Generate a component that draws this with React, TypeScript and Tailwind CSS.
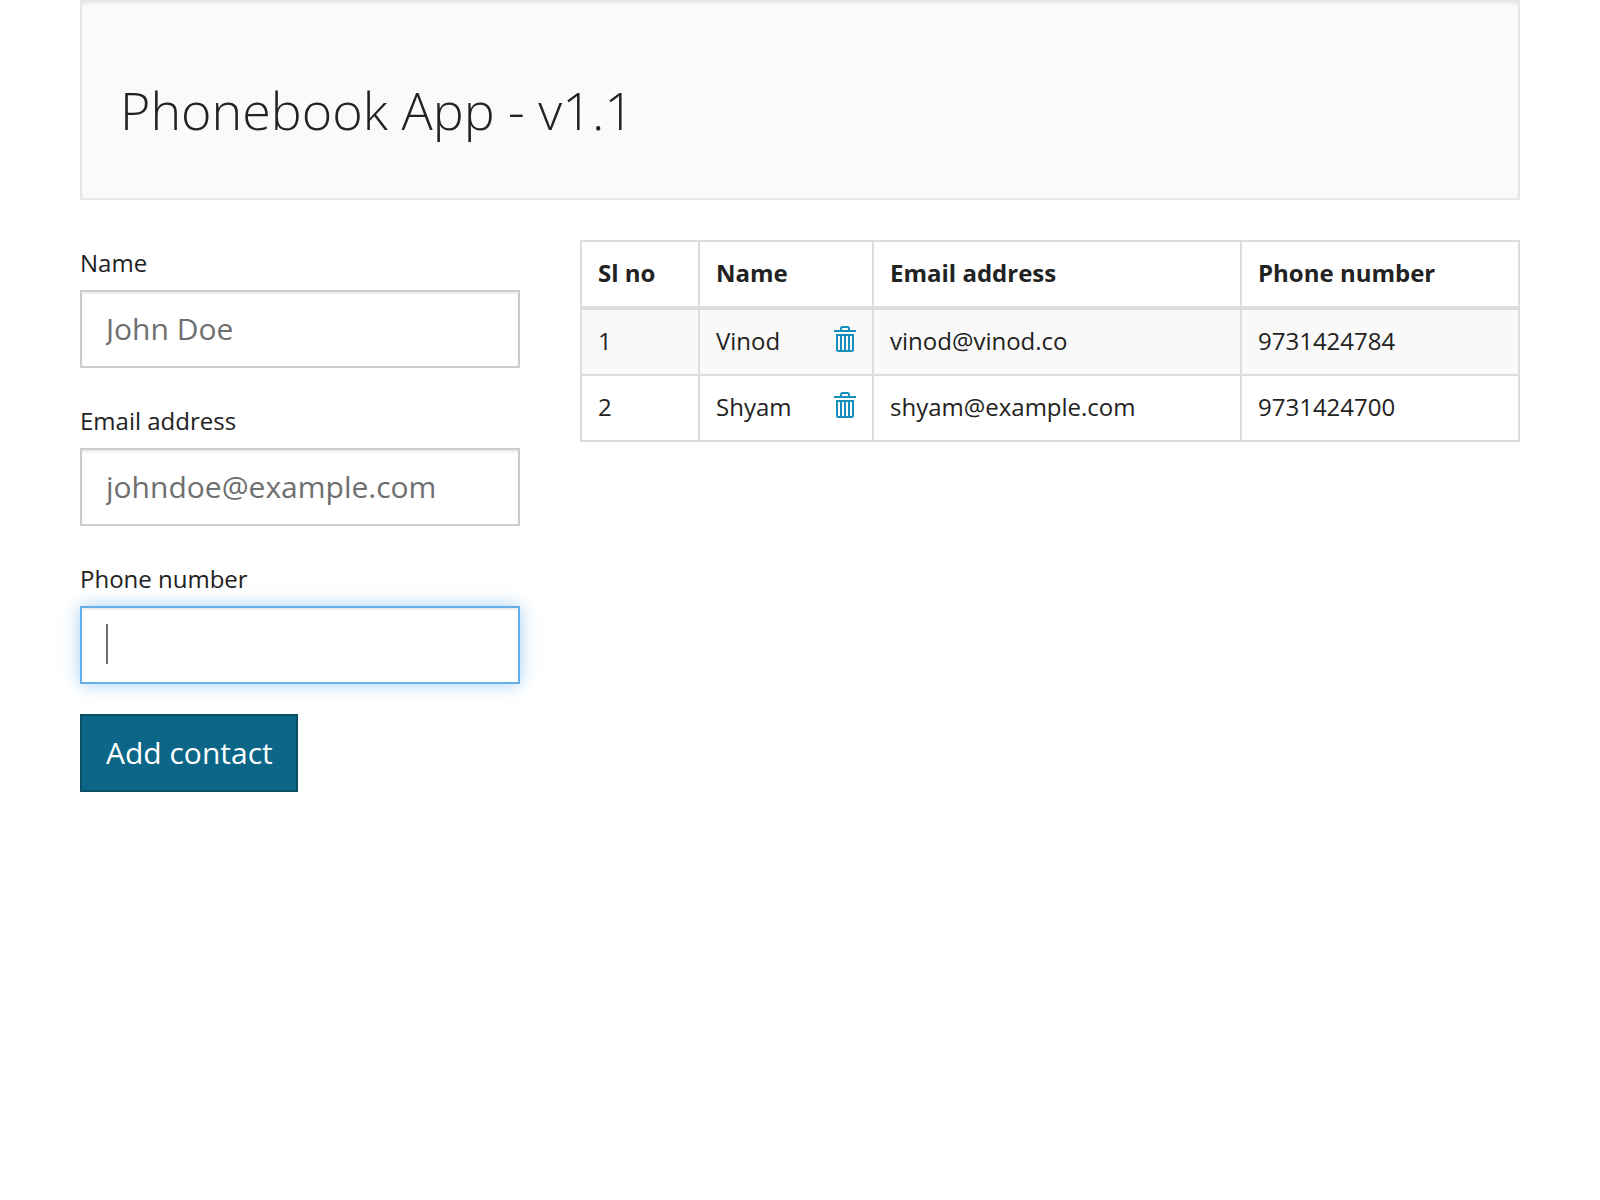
import React from "react";

type Contact = { id: number; name: string; email: string; phone: string };

const contacts: Contact[] = [
  { id: 1, name: "Vinod", email: "vinod@vinod.co", phone: "9731424784" },
  { id: 2, name: "Shyam", email: "shyam@example.com", phone: "9731424700" },
];

function TrashIcon() {
  return (
    <svg width="22" height="26" viewBox="0 0 22 26" fill="none" stroke="currentColor" strokeWidth="2" aria-hidden="true">
      <path d="M0 5h22" />
      <path d="M7 4V2.500Q7 1 8.500 1h5Q15 1 15 2.500V4" />
      <path d="M3 9h16v14.500Q19 25 17.500 25h-13Q3 25 3 23.500z" />
      <path d="M7 9v16M11 9v16M15 9v16" />
    </svg>
  );
}

const field =
  "block h-[78px] w-full border-2 border-[#cccccc] bg-white px-6 pb-0.5 text-[30px] text-[#6f6f6f] shadow-[inset_0_2px_2px_rgba(0,0,0,0.08)] outline-none placeholder:text-[#6f6f6f]";
const activeField =
  "block h-[78px] w-full border-2 border-[#66afe9] bg-white px-6 pb-0.5 text-[30px] text-[#6f6f6f] caret-transparent shadow-[inset_0_2px_2px_rgba(0,0,0,0.08),0_0_16px_rgba(102,175,233,0.6)] outline-none";
const label = "block h-[50px] pt-[5px] text-2xl leading-9";
const cell = "border-2 border-[#dddddd] px-4 pb-0.5 text-left";

export default function App() {
  return (
    <div className="min-h-screen bg-white px-20 pb-10 font-['Open_Sans',sans-serif] text-[#222222]">
      <header className="border-2 border-[#e7e7e7] bg-[#fafafa] px-[38px] pt-[69px] pb-[49px] shadow-[inset_0_2px_2px_rgba(0,0,0,0.06)]">
        <h1 className="text-[52px] leading-[78px] font-light">Phonebook App - v1.1</h1>
      </header>
      <main className="mt-10 grid grid-cols-3 items-start gap-x-[60px]">
        <form onSubmit={(e) => e.preventDefault()}>
          <div className="mb-[30px]">
            <label htmlFor="name" className={label}>Name</label>
            <input id="name" type="text" placeholder="John Doe" className={field} />
          </div>
          <div className="mb-[30px]">
            <label htmlFor="email" className={label}>Email address</label>
            <input id="email" type="email" placeholder="johndoe@example.com" className={field} />
          </div>
          <div className="mb-[30px]">
            <label htmlFor="phone" className={label}>Phone number</label>
            <div className="relative">
              <input id="phone" type="tel" className={activeField} />
              <span aria-hidden="true" className="pointer-events-none absolute top-[18px] left-[26px] h-10 w-0.5 bg-[#6f6f6f]" />
            </div>
          </div>
          <button type="submit" className="block h-[78px] border-2 border-[#094f66] bg-[#0c6687] pr-[23px] pb-0.5 pl-6 text-[30px] text-white">
            Add contact
          </button>
        </form>
        <table className="col-span-2 w-full table-fixed border-collapse border-2 border-[#dddddd] text-2xl">
          <colgroup>
            <col className="w-[118px]" />
            <col className="w-[174px]" />
            <col className="w-[368px]" />
            <col />
          </colgroup>
          <thead>
            <tr className="h-[67px] border-b-4 border-[#dddddd]">
              <th scope="col" className={cell}>Sl no</th>
              <th scope="col" className={cell}>Name</th>
              <th scope="col" className={cell}>Email address</th>
              <th scope="col" className={cell}>Phone number</th>
            </tr>
          </thead>
          <tbody>
            {contacts.map((c) => (
              <tr key={c.id} className="h-[66px] first:h-[67px] odd:bg-[#f9f9f9]">
                <td className={cell}>{c.id}</td>
                <td className={cell}>
                  <div className="flex items-center justify-between">
                    {c.name}
                    <button type="button" aria-label={`Delete ${c.name}`} className="pb-1 text-[#168fbd]">
                      <TrashIcon />
                    </button>
                  </div>
                </td>
                <td className={cell}>{c.email}</td>
                <td className={cell}>{c.phone}</td>
              </tr>
            ))}
          </tbody>
        </table>
      </main>
    </div>
  );
}
